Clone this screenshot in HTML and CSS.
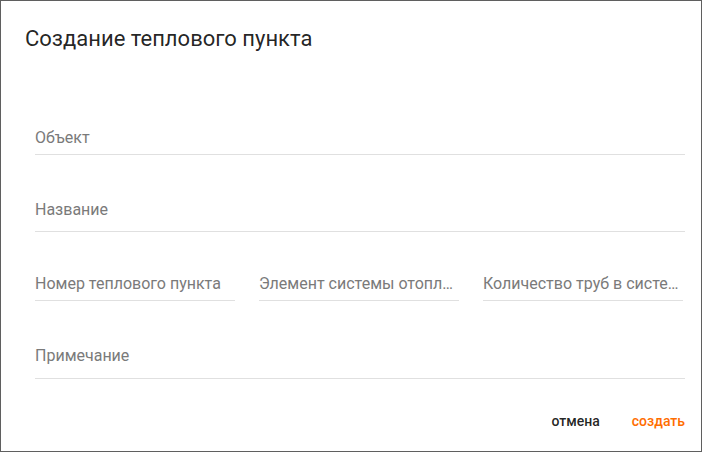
FILE: index.html
```html
<!DOCTYPE html>
<html lang="ru">
<head>
    <meta charset="UTF-8">
    <meta name="viewport" content="width=device-width, initial-scale=1.0">
    <title>Создание теплового пункта</title>
    <link rel="stylesheet" href="styles.css">
</head>
<body>

    <div class="dialog">
        <h2 class="dialog-title">Создание теплового пункта</h2>

        <div class="form">
            <div class="field field-object">
                <span class="label">Объект</span>
            </div>

            <div class="field field-name">
                <span class="label">Название</span>
            </div>

            <div class="field-row">
                <div class="field field-small">
                    <span class="label">Номер теплового пункта</span>
                </div>
                <div class="field field-small">
                    <span class="label">Элемент системы отопления</span>
                </div>
                <div class="field field-small">
                    <span class="label">Количество труб в системе</span>
                </div>
            </div>

            <div class="field field-note">
                <span class="label">Примечание</span>
            </div>
        </div>

        <div class="actions">
            <button class="btn">отмена</button>
            <button class="btn btn-primary">создать</button>
        </div>
    </div>

</body>
</html>
```

FILE: styles.css
```css
* {
    box-sizing: border-box;
}
body {
    margin: 0;
    padding: 0;
    background: #fff;
    font-family: Roboto, 'Noto Sans', sans-serif;
}
.dialog {
    width: 702px;
    height: 452px;
    border: 1px solid #5f5f5f;
    background: #fff;
}
.dialog-title {
    margin: 0;
    padding: 22px 24px 0 24px;
    font-size: 22px;
    font-weight: 400;
    line-height: 32px;
    color: rgba(0, 0, 0, 0.87);
}
.form {
    padding: 0 16px 0 34px;
}
.field {
    border-bottom: 1px solid #e0e0e0;
    line-height: 20px;
    font-size: 16px;
    color: #7a7a7a;
    white-space: nowrap;
    overflow: hidden;
    text-overflow: ellipsis;
}
.field-object {
    margin-top: 73px;
    padding-bottom: 6px;
}
.field-name {
    margin-top: 45px;
    padding-bottom: 11px;
}
.field-row {
    display: flex;
    gap: 24px;
    margin-top: 42px;
}
.field-small {
    width: 200px;
    padding-bottom: 6px;
}
.field-note {
    margin-top: 45px;
    padding-bottom: 12px;
}
.actions {
    display: flex;
    justify-content: flex-end;
    gap: 32px;
    padding: 32px 16px 0 0;
}
.btn {
    border: none;
    background: none;
    padding: 0;
    font-family: Roboto, 'Noto Sans', sans-serif;
    font-size: 14px;
    font-weight: 500;
    line-height: 20px;
    color: rgba(0, 0, 0, 0.87);
    cursor: pointer;
}
.btn-primary {
    color: #ff6d00;
}
```
